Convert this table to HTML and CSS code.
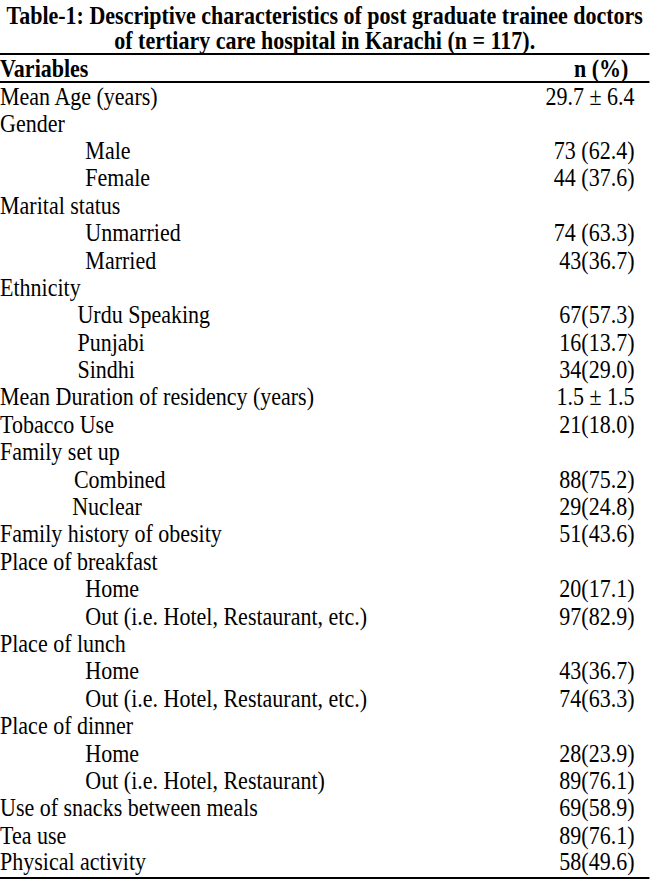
FILE: index.html
```html
<!DOCTYPE html>
<html lang="en">
<head>
<meta charset="utf-8">
<title>Table-1</title>
<link rel="stylesheet" href="styles.css">
</head>
<body>
<div class="sheet">
<div class="page">
  <h1 class="title">Table-1: Descriptive characteristics of post graduate trainee doctors<br>of tertiary care hospital in Karachi (n = 117).</h1>
  <table class="stats">
    <thead>
      <tr><th class="var">Variables</th><th class="val">n (%)</th></tr>
    </thead>
    <tbody>
      <tr><td class="var">Mean Age (years)</td><td class="val">29.7 ± 6.4</td></tr>
      <tr><td class="var">Gender</td><td class="val"></td></tr>
      <tr><td class="var in-a">Male</td><td class="val">73 (62.4)</td></tr>
      <tr><td class="var in-a">Female</td><td class="val">44 (37.6)</td></tr>
      <tr><td class="var">Marital status</td><td class="val"></td></tr>
      <tr><td class="var in-a">Unmarried</td><td class="val">74 (63.3)</td></tr>
      <tr><td class="var in-a">Married</td><td class="val">43(36.7)</td></tr>
      <tr><td class="var">Ethnicity</td><td class="val"></td></tr>
      <tr><td class="var in-b">Urdu Speaking</td><td class="val">67(57.3)</td></tr>
      <tr><td class="var in-b">Punjabi</td><td class="val">16(13.7)</td></tr>
      <tr><td class="var in-b">Sindhi</td><td class="val">34(29.0)</td></tr>
      <tr><td class="var">Mean Duration of residency (years)</td><td class="val">1.5 ± 1.5</td></tr>
      <tr><td class="var">Tobacco Use</td><td class="val">21(18.0)</td></tr>
      <tr><td class="var">Family set up</td><td class="val"></td></tr>
      <tr><td class="var in-c">Combined</td><td class="val">88(75.2)</td></tr>
      <tr><td class="var in-d">Nuclear</td><td class="val">29(24.8)</td></tr>
      <tr><td class="var">Family history of obesity</td><td class="val">51(43.6)</td></tr>
      <tr><td class="var">Place of breakfast</td><td class="val"></td></tr>
      <tr><td class="var in-a">Home</td><td class="val">20(17.1)</td></tr>
      <tr><td class="var in-a">Out (i.e. Hotel, Restaurant, etc.)</td><td class="val">97(82.9)</td></tr>
      <tr><td class="var">Place of lunch</td><td class="val"></td></tr>
      <tr><td class="var in-a">Home</td><td class="val">43(36.7)</td></tr>
      <tr><td class="var in-a">Out (i.e. Hotel, Restaurant, etc.)</td><td class="val">74(63.3)</td></tr>
      <tr><td class="var">Place of dinner</td><td class="val"></td></tr>
      <tr><td class="var in-a">Home</td><td class="val">28(23.9)</td></tr>
      <tr><td class="var in-a">Out (i.e. Hotel, Restaurant)</td><td class="val">89(76.1)</td></tr>
      <tr><td class="var">Use of snacks between meals</td><td class="val">69(58.9)</td></tr>
      <tr><td class="var">Tea use</td><td class="val">89(76.1)</td></tr>
      <tr><td class="var">Physical activity</td><td class="val">58(49.6)</td></tr>
    </tbody>
  </table>
</div>
</div>
</body>
</html>
```
FILE: styles.css
```css
html, body {
  margin: 0;
  padding: 0;
  background: #ffffff;
}

/* Fixed 650px sheet; clips the unscaled layout box of the condensed page. */
.sheet {
  width: 650px;
  height: 888px;
  overflow: hidden;
}

/* The source table uses a tall, horizontally condensed Times face:
   set it at 25px and condense the whole page horizontally. */
.page {
  width: 738px;
  transform: scaleX(0.88);
  transform-origin: 0 0;
  font-family: "Liberation Serif", "Times New Roman", serif;
  color: #000;
}

.title {
  margin: 0;
  height: 53px;
  font-size: 25px;
  font-weight: bold;
  line-height: 25px;
  text-align: center;
  padding-top: 3px;
  box-sizing: border-box;
  white-space: nowrap;
}

.stats {
  width: 738px;
  border-collapse: collapse;
  border-top: 2px solid #000;
  border-bottom: 2px solid #000;
}

.stats thead tr {
  height: 28px;
  border-bottom: 2px solid #000;
}

.stats th {
  font-size: 25px;
  font-weight: bold;
  line-height: 25px;
  padding: 0;
  vertical-align: middle;
}

.stats th.var {
  text-align: left;
}

.stats th.val {
  text-align: right;
  padding-right: 24px;
}

.stats tbody tr {
  height: 27.4px;
}

.stats td {
  font-size: 25px;
  padding: 0;
  line-height: 25px;
  vertical-align: middle;
  white-space: nowrap;
}

.stats tbody tr:last-child td {
  padding-bottom: 3px;
}

.stats td.val {
  text-align: right;
  padding-right: 17px;
}

.stats td.in-a { padding-left: 97px; }
.stats td.in-b { padding-left: 88px; }
.stats td.in-c { padding-left: 84px; }
.stats td.in-d { padding-left: 82px; }
```
